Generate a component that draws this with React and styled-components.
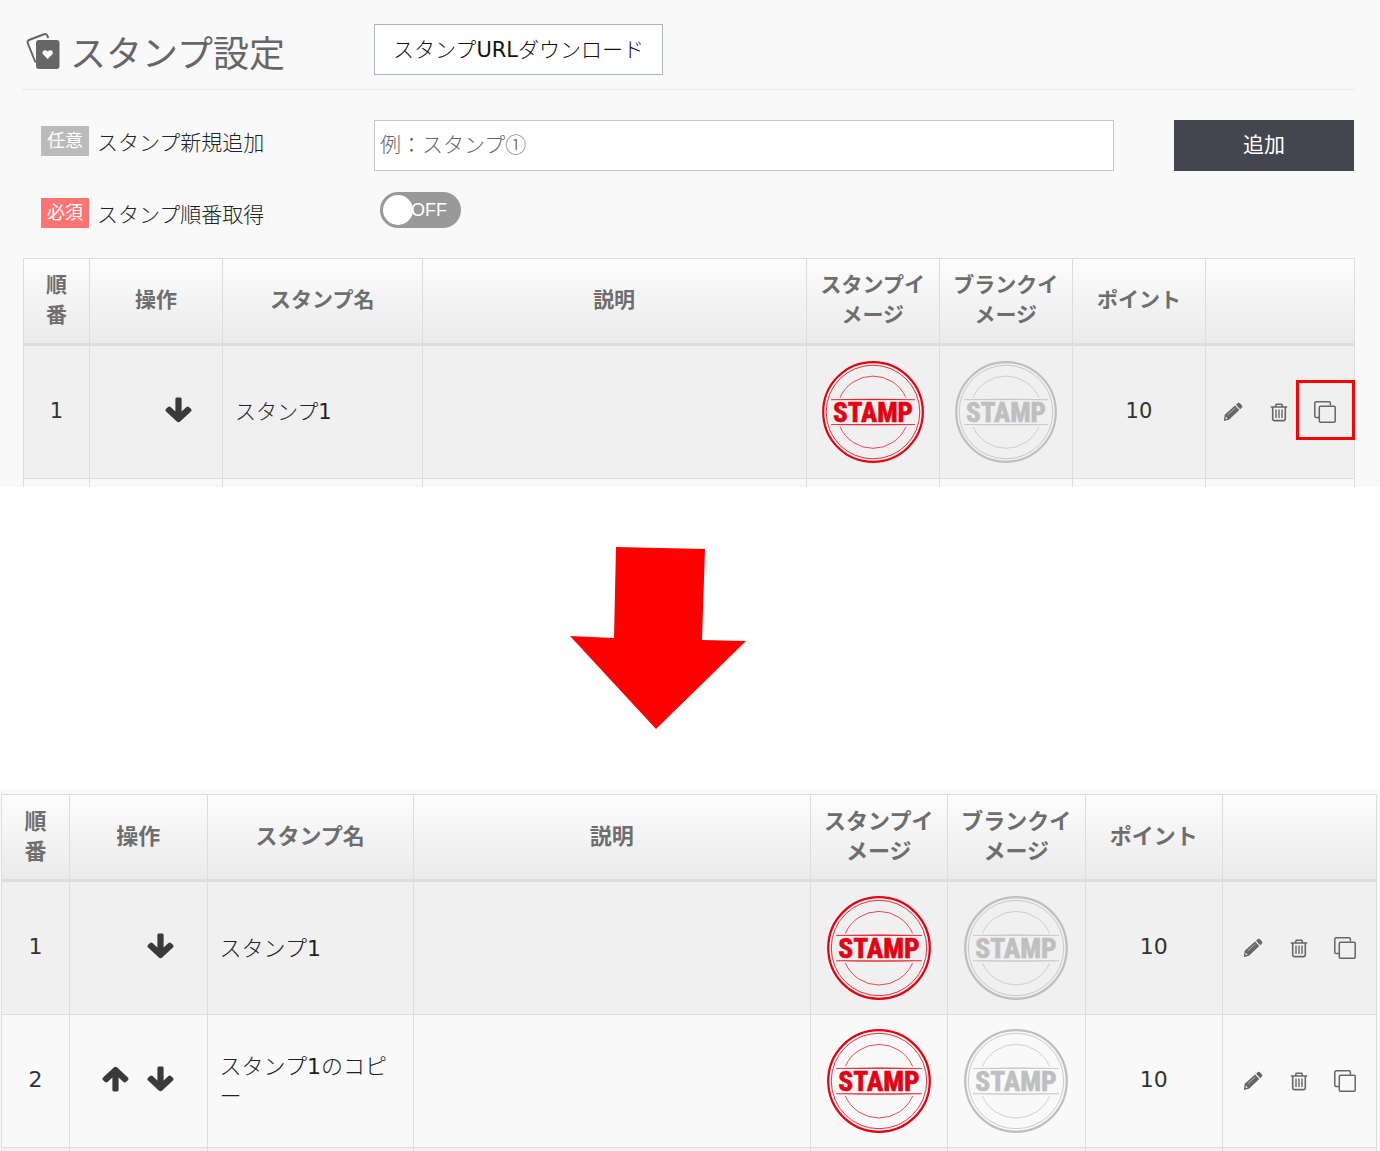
import React from "react";
import styled, { createGlobalStyle, css } from "styled-components";

const GlobalStyle = createGlobalStyle`
  *, *::before, *::after { box-sizing: border-box; }
  body {
    margin: 0;
    background: #fff;
    color: #333;
    font-family: "DejaVu Sans", "Noto Sans CJK JP", sans-serif;
    font-size: 21px;
    line-height: 30px;
  }
  button, input { font: inherit; color: inherit; }
`;

const japaneseLight = css`
  font-family: "Noto Sans CJK JP", sans-serif;
  font-weight: 300;
`;

const Latin = styled.span`
  font-family: "DejaVu Sans", sans-serif;
  font-weight: 400;
  line-height: 20px;
`;

const Panel = styled.section`
  background: #f9f9f9;
  padding: ${(p) => (p.$wide ? "5px 3px 0 1px" : "24px 25px 0 23px")};
`;

const Header = styled.header`
  display: grid;
  grid-template-columns: 351px 1fr;
  align-items: start;
  padding-bottom: 14px;
  border-bottom: 1px dotted #ddd;
`;

const Title = styled.h1`
  display: flex;
  align-items: center;
  gap: 9px;
  margin: 0;
  padding: 4px 0 0 3px;
  color: #666;
  font-family: "Noto Sans CJK JP", sans-serif;
  font-size: 36px;
  font-weight: 400;
  line-height: 46px;
`;

const OutlineButton = styled.button`
  ${japaneseLight}
  justify-self: start;
  height: 51px;
  padding: 0 18px 4px;
  border: 1px solid #a9b7b9;
  background: #fff;
  white-space: nowrap;
  color: #111;
`;

const Form = styled.form`
  display: grid;
  gap: 21px;
  padding: 30px 1px 30px 0;
`;

const FormRow = styled.div`
  display: grid;
  grid-template-columns: 351px 1fr auto;
  align-items: start;
`;

const FieldName = styled.div`
  display: flex;
  align-items: flex-start;
  gap: 8px;
  padding: 6px 0 0 18px;
`;

const Badge = styled.span`
  height: 30px;
  padding: 0 6px;
  background: ${(p) => (p.$required ? "#ff7473" : "#bbb")};
  color: #fff;
  font-family: "Noto Sans CJK JP", sans-serif;
  font-size: 18px;
  line-height: 26px;
`;

const FieldLabel = styled.label`
  ${japaneseLight}
  color: #222;
  line-height: 30px;
`;

const TextInput = styled.input`
  ${japaneseLight}
  width: 100%;
  height: 51px;
  padding: 0 5px 6px;
  border: 1px solid #c6c6c6;
  border-radius: 0;
  background: #fff;
  &::placeholder { color: #666; opacity: 1; }
`;

const AddButton = styled.button`
  width: 180px;
  height: 51px;
  margin-left: 60px;
  padding: 0 0 6px;
  border: 0;
  background: #44464f;
  color: #fff;
  font-family: "Noto Sans CJK JP", sans-serif;
`;

const Switch = styled.span`
  position: relative;
  display: block;
  width: 81px;
  height: 36px;
  margin-left: 6px;
  padding-left: 31px;
  border-radius: 18px;
  background: #999;
  color: #fff;
  font-family: "Liberation Sans", sans-serif;
  font-size: 18px;
  line-height: 36px;
  &::before {
    content: "";
    position: absolute;
    left: 3px;
    top: 3px;
    width: 30px;
    height: 30px;
    border-radius: 50%;
    background: #fff;
  }
`;

const SwitchInput = styled.input`
  position: absolute;
  inset: 0;
  width: 100%;
  height: 100%;
  margin: 0;
  opacity: 0;
  cursor: pointer;
`;

const Table = styled.table`
  width: 100%;
  table-layout: fixed;
  border-collapse: separate;
  border-spacing: 0;
  border: solid #ddd;
  border-width: 1px 0 0 1px;
  font-size: ${(p) => (p.$large ? "22px" : "21px")};
`;

const Col = styled.col`
  width: ${(p) => p.$width};
`;

const HeadCell = styled.th`
  height: 87px;
  padding: 0 12px 7px;
  border: solid #ddd;
  border-width: 0 1px 3px 0;
  background: linear-gradient(#fdfdfd, #eaeaea);
  color: #6e6e6e;
  font-family: "Noto Sans CJK JP", sans-serif;
  font-weight: 700;
  word-break: break-all;
`;

const Row = styled.tr`
  background: ${(p) => (p.$shaded ? "#f0f0f0" : "#f9f9f9")};
`;

const Cell = styled.td`
  height: 133px;
  padding: 0 12px 2px;
  border: solid #ddd;
  border-width: 0 1px 1px 0;
  text-align: center;
  word-break: break-all;
`;

const NameCell = styled(Cell)`
  ${japaneseLight}
  padding-bottom: 4px;
  color: #222;
  text-align: left;
  line-break: anywhere;
`;

const MoveCell = styled(Cell)`
  padding-bottom: 4px;
`;

const PictureCell = styled(Cell)`
  padding-bottom: 0;
`;

const ActionCell = styled(Cell)`
  padding: 0 13px 0 12px;
`;

const PeekCell = styled.td`
  height: ${(p) => p.$height};
  padding: 0;
  border-right: 1px solid #ddd;
`;

const IconRow = styled.div`
  display: flex;
  justify-content: center;
  gap: ${(p) => p.$gap};
`;

const IconButton = styled.button`
  position: relative;
  display: grid;
  place-items: center;
  width: ${(p) => p.$size};
  height: ${(p) => p.$size};
  padding: 0;
  border: 0;
  background: none;
  color: ${(p) => p.$tone};
  ${(p) =>
    p.$marked &&
    css`
      &::after {
        content: "";
        position: absolute;
        inset: -20px -18px -16px -17px;
        border: 3px solid #f00;
      }
    `}
`;

const EmptySlot = styled.span`
  width: 27px;
`;

const StampArt = styled.svg`
  display: block;
  margin: 0 auto;
`;

const StampText = styled.text`
  font-family: "Roboto Condensed", "Noto Sans CJK JP", sans-serif;
  font-size: 27px;
  font-weight: 800;
`;

const StepArrow = styled.div`
  display: flex;
  justify-content: center;
  padding: 60px 64px 60px 0;
  svg { display: block; }
`;

function CardsIcon() {
  return (
    <svg width="35" height="38" viewBox="0 0 35 38" aria-hidden="true">
      <path d="M9.500 30.500 1.700 11C1.300 9.600 1.800 8.500 3 8L18 2.200C19.500 1.600 20.600 2 21.200 3.300L22.200 6" fill="none" stroke="#666" strokeWidth="2" />
      <rect x="10" y="8" width="23.500" height="29" rx="3" fill="#666" />
      <path d="M21.700 27 17.500 22.700c-2.800-3 1.300-6.500 4.200-3.200 2.900-3.300 7 .2 4.200 3.200Z" fill="#fff" />
    </svg>
  );
}

function ArrowIcon({ up }) {
  return (
    <svg width="27" height="26" viewBox="0 0 27 26" aria-hidden="true">
      <path
        transform={up ? "rotate(180 13.500 13)" : undefined}
        fill="currentColor"
        d="M10.400 2Q10.400.6 11.800.6H15.200Q16.600.6 16.600 2V14.500L21.200 10.200Q22.800 8.900 24.200 10.200L25.900 11.800Q27.200 13.100 25.900 14.500L15.200 24.500Q13.500 26 11.800 24.500L1.100 14.500Q-.2 13.100 1.100 11.800L2.800 10.200Q4.200 8.900 5.800 10.200L10.400 14.500Z"
      />
    </svg>
  );
}

function PencilIcon() {
  return (
    <svg width="20" height="20" viewBox="0 0 20 20" aria-hidden="true">
      <path d="M1.700 12.800 12 3.500 16.300 8 6 17.700.8 19Z" fill="currentColor" />
      <path d="M13 2.700 14.700 1.200C15.400.6 16.200.6 16.900 1.300L18.900 3.400C19.500 4.100 19.500 4.900 18.900 5.600L17.200 7.200Z" fill="currentColor" />
      <path d="M2.700 14.400 4.700 16.500 2.600 17.300Z" fill="#f0f0f0" />
      <path d="M4.500 13 12.300 6" stroke="#bbb" strokeWidth=".9" />
    </svg>
  );
}

function TrashIcon() {
  return (
    <svg width="18" height="20" viewBox="0 0 18 20" fill="none" stroke="currentColor" strokeWidth="1.600" aria-hidden="true">
      <path d="M.8 5H17.200M5.300 5 6.300 2.200H11.700L12.700 5M2.700 5V17C2.700 18 3.300 18.600 4.300 18.600H13.700C14.700 18.600 15.300 18 15.300 17V5" />
      <path d="M6 7.500V16M9 7.500V16M12 7.500V16" strokeWidth="1.400" />
    </svg>
  );
}

function CopyIcon() {
  return (
    <svg width="22" height="22" viewBox="0 0 22 22" fill="none" stroke="currentColor" strokeWidth="1.500" aria-hidden="true">
      <path d="M5 16.500H2.200C1.300 16.500.8 16 .8 15.200V2.200C.8 1.300 1.300.8 2.200.8H15C15.900.8 16.400 1.300 16.400 2.200V4.500" />
      <rect x="5.300" y="5.300" width="15.900" height="15.900" rx="1.200" />
    </svg>
  );
}

function Stamp({ blank, size }) {
  const color = blank ? "#bfbfbf" : "#e60012";
  return (
    <StampArt width={size} height={size} viewBox="-51 -51 102 102" role="img" aria-label={blank ? "ブランクイメージ" : "スタンプイメージ"}>
      <g fill="none" stroke={color}>
        <circle r="49.800" strokeWidth="2.200" />
        <circle r="46.800" strokeWidth=".8" />
        <path d="M-33-14.300A36 36 0 0 1 33-14.300M-33 14.700A36 36 0 0 0 33 14.700" strokeWidth=".7" />
      </g>
      <path d="M-42-12.300Q0-13.500 42-12.300Q0-12.400-42-12.300ZM-42 12.500Q0 13.700 42 12.500Q0 12.600-42 12.500Z" fill={color} stroke={color} strokeWidth=".5" />
      <StampText x="0" y="10" textAnchor="middle" fill={color} stroke={color} strokeWidth=".5">STAMP</StampText>
    </StampArt>
  );
}

const columns = [
  ["順番", "4.95%"],
  ["操作", "10%"],
  ["スタンプ名", "15%"],
  ["説明", "auto"],
  ["スタンプイメージ", "10%"],
  ["ブランクイメージ", "10%"],
  ["ポイント", "10%"],
  ["", "11.2%"],
];

function StampTable({ rows, large, marked, peek, peekShaded }) {
  const size = large ? 104 : 102;
  return (
    <Table $large={large}>
      <colgroup>
        {columns.map(([name, width]) => <Col key={name} $width={width} />)}
      </colgroup>
      <thead>
        <tr>
          {columns.map(([name]) => <HeadCell key={name} scope="col">{name}</HeadCell>)}
        </tr>
      </thead>
      <tbody>
        {rows.map((row, i) => (
          <Row key={i} $shaded={i % 2 === 0}>
            <Cell>{i + 1}</Cell>
            <MoveCell>
              <IconRow $gap="18px">
                {i > 0 ? (
                  <IconButton type="button" $size="27px" $tone="#3a3a3a" aria-label="上へ"><ArrowIcon up /></IconButton>
                ) : <EmptySlot />}
                <IconButton type="button" $size="27px" $tone="#3a3a3a" aria-label="下へ"><ArrowIcon /></IconButton>
              </IconRow>
            </MoveCell>
            <NameCell>スタンプ<Latin>1</Latin>{row.suffix}</NameCell>
            <Cell />
            <PictureCell><Stamp size={size} /></PictureCell>
            <PictureCell><Stamp size={size} blank /></PictureCell>
            <Cell>{row.points}</Cell>
            <ActionCell>
              <IconRow $gap="22px">
                <IconButton type="button" $size="24px" $tone="#666" aria-label="編集"><PencilIcon /></IconButton>
                <IconButton type="button" $size="24px" $tone="#666" aria-label="削除"><TrashIcon /></IconButton>
                <IconButton type="button" $size="24px" $tone="#666" $marked={marked} aria-label="コピー"><CopyIcon /></IconButton>
              </IconRow>
            </ActionCell>
          </Row>
        ))}
        <Row $shaded={peekShaded}>
          {columns.map(([name]) => <PeekCell key={name} $height={peek} />)}
        </Row>
      </tbody>
    </Table>
  );
}

export default function App() {
  return (
    <>
      <GlobalStyle />
      <main>
        <Panel>
          <Header>
            <Title><CardsIcon />スタンプ設定</Title>
            <OutlineButton type="button">スタンプ<Latin>URL</Latin>ダウンロード</OutlineButton>
          </Header>
          <Form onSubmit={(e) => e.preventDefault()}>
            <FormRow>
              <FieldName>
                <Badge>任意</Badge>
                <FieldLabel htmlFor="stamp-name">スタンプ新規追加</FieldLabel>
              </FieldName>
              <TextInput id="stamp-name" type="text" placeholder="例：スタンプ①" />
              <AddButton type="submit">追加</AddButton>
            </FormRow>
            <FormRow>
              <FieldName>
                <Badge $required>必須</Badge>
                <FieldLabel htmlFor="stamp-order">スタンプ順番取得</FieldLabel>
              </FieldName>
              <Switch>
                OFF
                <SwitchInput id="stamp-order" type="checkbox" role="switch" />
              </Switch>
            </FormRow>
          </Form>
          <StampTable marked peek="8px" rows={[{ points: 10 }]} />
        </Panel>
        <StepArrow>
          <svg width="176" height="182" viewBox="0 0 176 182" aria-hidden="true">
            <path d="M46 0 135 2 132 93 176 94 86 182 0 89 44 91Z" fill="#f00" />
          </svg>
        </StepArrow>
        <Panel $wide>
          <StampTable
            large
            peek="3px"
            peekShaded
            rows={[{ points: 10 }, { suffix: "のコピー", points: 10 }]}
          />
        </Panel>
      </main>
    </>
  );
}
